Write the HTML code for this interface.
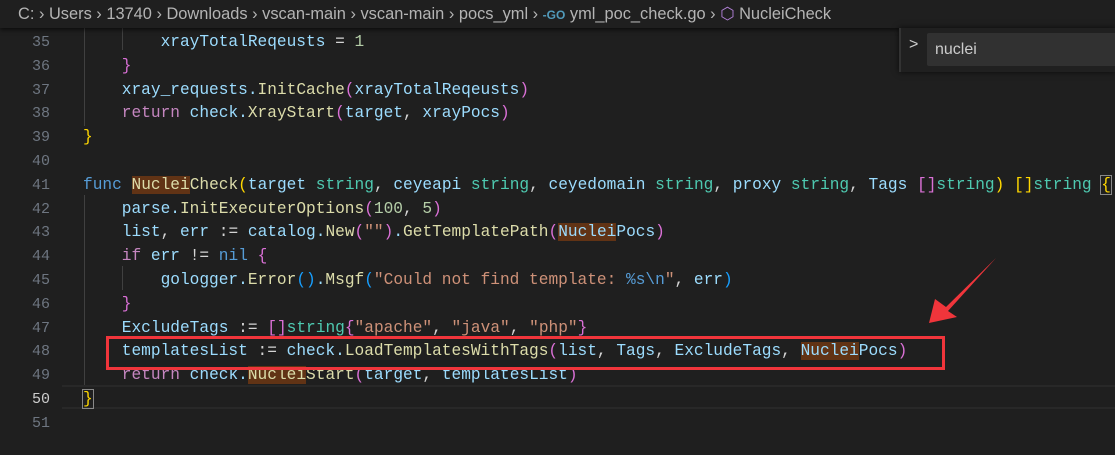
<!DOCTYPE html>
<html><head><meta charset="utf-8"><style>
*{margin:0;padding:0;box-sizing:border-box}
body{width:1115px;height:455px;background:#1f1f1f;overflow:hidden;position:relative;font-family:"Liberation Mono",monospace}
.bc{position:absolute;left:0;top:0;width:1115px;height:28px;background:#1f1f1f;box-shadow:0 2px 4px rgba(0,0,0,.6);z-index:3;font-family:"Liberation Sans",sans-serif;font-size:16.4px;color:#b4b4b4;line-height:28px;padding-left:18px;white-space:pre}
.ln{position:absolute;left:0;width:50px;text-align:right;color:#6e7681;font-size:15px}
.code{position:absolute;left:83px;font-size:16.17px;white-space:pre;color:#9cdcfe}
.k{color:#c586c0}.f{color:#dcdcaa}.t{color:#4ec9b0}.s{color:#ce9178}.n{color:#b5cea8}.b{color:#569cd6}.w{color:#d4d4d4}
.y{color:#ffd700}.p{color:#da70d6}.u{color:#179fff}
.h{background:#613315}
.g{position:absolute;width:1px;background:#404040}
</style></head><body>
<div class="bc">C: › Users › 13740 › Downloads › vscan-main › vscan-main › pocs_yml › <span style="color:#519aba;font-weight:bold;font-size:12px">-GO</span> yml_poc_check.go › <span style="color:#b180d7">⬡</span> NucleiCheck</div>

<div class="g" style="left:84px;top:28px;height:98px"></div>
<div class="g" style="left:122px;top:28px;height:22px"></div>
<div class="g" style="left:84px;top:195px;height:190px"></div>
<div class="g" style="left:122px;top:266px;height:24px"></div>
<div style="position:absolute;left:62px;top:385px;width:1053px;height:24px;border-top:2px solid #282828;border-bottom:2px solid #282828"></div>

<div id="c"></div>
<script>
var L=[
[35,'        xrayTotalReqeusts <span class="w">=</span> <span class="n">1</span>'],
[36,'    <span class="p">}</span>'],
[37,'    xray_requests.<span class="f">InitCache</span><span class="p">(</span>xrayTotalReqeusts<span class="p">)</span>'],
[38,'    <span class="k">return</span> check.<span class="f">XrayStart</span><span class="p">(</span>target<span class="w">,</span> xrayPocs<span class="p">)</span>'],
[39,'<span class="y">}</span>'],
[40,''],
[41,'<span class="b">func</span> <span class="f"><span class="h">Nuclei</span>Check</span><span class="y">(</span>target <span class="t">string</span><span class="w">,</span> ceyeapi <span class="t">string</span><span class="w">,</span> ceyedomain <span class="t">string</span><span class="w">,</span> proxy <span class="t">string</span><span class="w">,</span> Tags <span class="p">[]</span><span class="t">string</span><span class="y">)</span> <span class="y">[]</span><span class="t">string</span> <span class="y" style="outline:1px solid #888">{</span>'],
[42,'    parse.<span class="f">InitExecuterOptions</span><span class="p">(</span><span class="n">100</span><span class="w">,</span> <span class="n">5</span><span class="p">)</span>'],
[43,'    list<span class="w">,</span> err <span class="w">:=</span> catalog.<span class="f">New</span><span class="p">(</span><span class="s">""</span><span class="p">)</span>.<span class="f">GetTemplatePath</span><span class="p">(</span><span class="h">Nuclei</span>Pocs<span class="p">)</span>'],
[44,'    <span class="k">if</span> err <span class="w">!=</span> <span class="b">nil</span> <span class="p">{</span>'],
[45,'        gologger.<span class="f">Error</span><span class="u">()</span>.<span class="f">Msgf</span><span class="u">(</span><span class="s">"Could not find template: </span><span class="b">%s\\n</span><span class="s">"</span><span class="w">,</span> err<span class="u">)</span>'],
[46,'    <span class="p">}</span>'],
[47,'    ExcludeTags <span class="w">:=</span> <span class="p">[]</span><span class="t">string</span><span class="p">{</span><span class="s">"apache"</span><span class="w">,</span> <span class="s">"java"</span><span class="w">,</span> <span class="s">"php"</span><span class="p">}</span>'],
[48,'    templatesList <span class="w">:=</span> check.<span class="f">LoadTemplatesWithTags</span><span class="p">(</span>list<span class="w">,</span> Tags<span class="w">,</span> ExcludeTags<span class="w">,</span> <span class="h">Nuclei</span>Pocs<span class="p">)</span>'],
[49,'    <span class="k">return</span> check.<span class="f"><span class="h">Nuclei</span>Start</span><span class="p">(</span>target<span class="w">,</span> templatesList<span class="p">)</span>'],
[50,'<span class="y" style="outline:1px solid #888">}</span>'],
[51,'']];
var h='';L.forEach(function(a,i){var t=30+i*23.8;h+='<div class="ln" style="top:'+(t+2)+'px;line-height:22px;'+(a[0]==50?'color:#ccc':'')+'">'+a[0]+'</div><div class="code" style="top:'+t+'px;line-height:24px">'+a[1]+'</div>';});
document.getElementById('c').innerHTML=h;
</script>

<div style="position:absolute;left:899px;top:28px;width:216px;height:44px;background:#202020;box-shadow:0 0 6px rgba(0,0,0,.7);border-left:2px solid #333;z-index:4">
<div style="position:absolute;left:8px;top:8px;color:#ccc;font-family:'Liberation Sans',sans-serif;font-size:16px">&gt;</div>
<div style="position:absolute;left:26px;top:5px;width:200px;height:33px;background:#313131;border-radius:2px;color:#ccc;font-family:'Liberation Sans',sans-serif;font-size:16px;line-height:33px;padding-left:8px">nuclei</div>
</div>

<div style="position:absolute;left:106px;top:336px;width:839px;height:34px;border:3px solid #f0353b"></div>
<svg style="position:absolute;left:0;top:0" width="1115" height="455"><polygon points="929,323 935,299 946,307 996,258 948,311 957,317" fill="#f0353b"/></svg>
</body></html>
